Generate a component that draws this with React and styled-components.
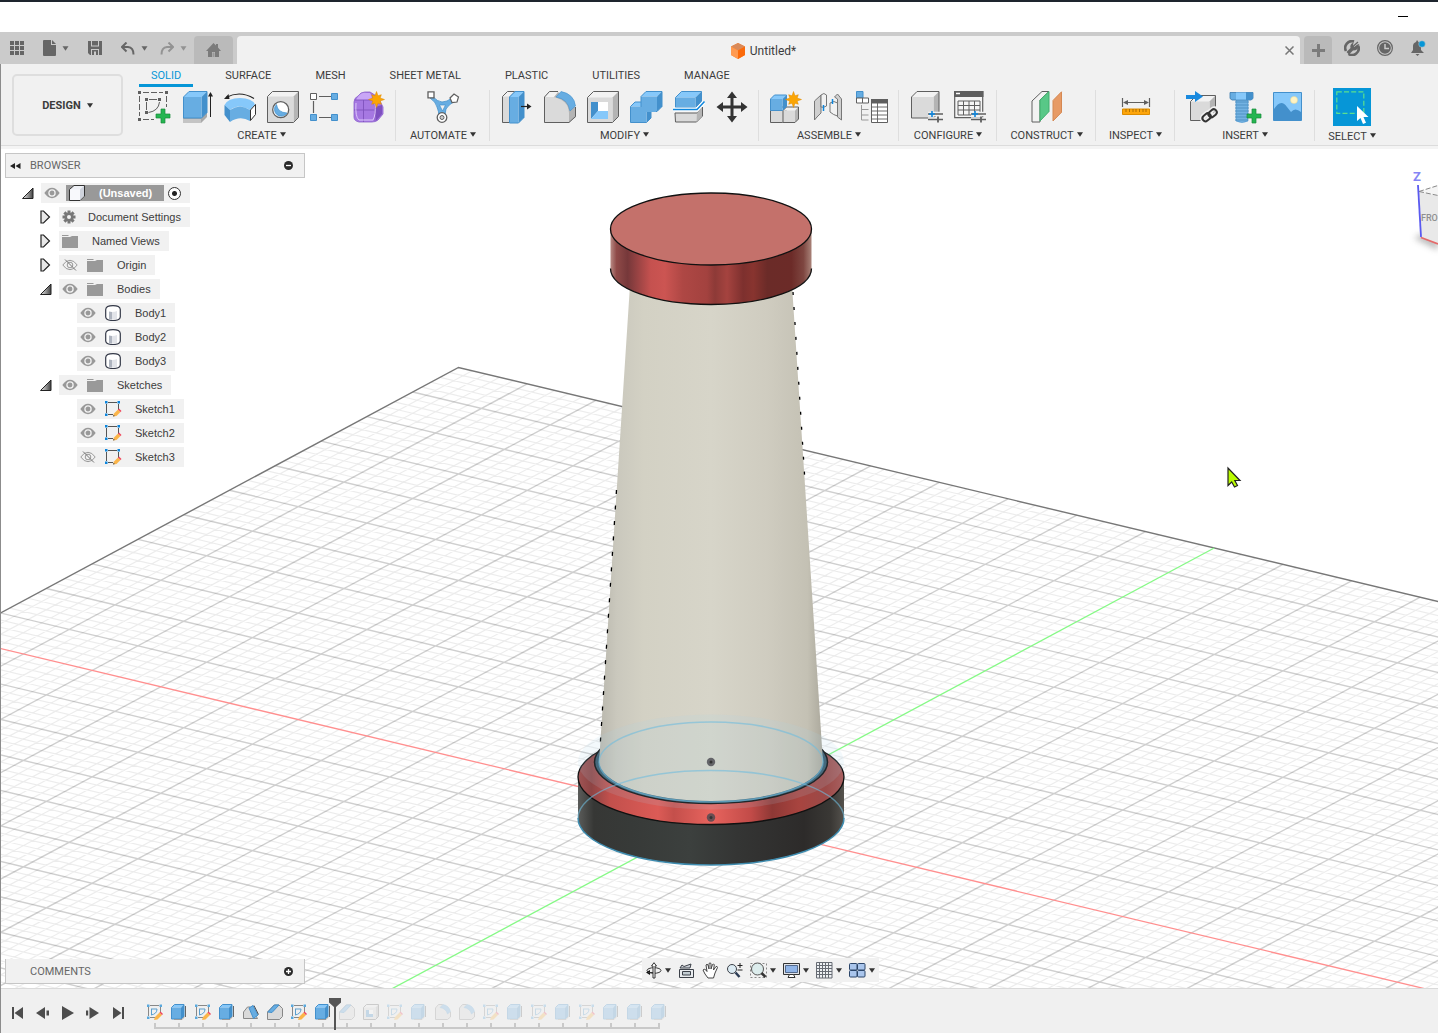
import React from "react";
import styled, { createGlobalStyle, css } from "styled-components";

const GlobalStyle = createGlobalStyle`
  * { box-sizing: border-box; }
  body {
    margin: 0;
    background: #fff;
    color: #3c3c3c;
    font-family: Roboto, "Liberation Sans", sans-serif;
    font-size: 11px;
    line-height: 13px;
  }
  button { font: inherit; color: inherit; background: none; border: 0; padding: 0; cursor: pointer; }
  ul { list-style: none; margin: 0; padding: 0; }
  svg { display: block; flex: none; }
`;

/* ---------- page frame ---------- */

const Page = styled.div`
  display: flex;
  flex-direction: column;
  min-height: 100vh;
  overflow: hidden;
`;

const TitleBar = styled.div`
  display: flex;
  justify-content: flex-end;
  height: 32px;
  padding: 0 30px;
  border-top: 2px solid #1e252e;
  background: #fff;
`;

const MinimizeButton = styled.button`
  display: flex;
  align-items: center;
  justify-content: center;
  width: 10px;
  height: 28px;
`;

const TabBar = styled.div`
  display: flex;
  height: 32px;
  padding-top: 4px;
  background: #cbcbcb;
  color: #666;
`;

const QuickTools = styled.div`
  display: flex;
  align-items: center;
  gap: 19px;
  width: 194px;
  padding: 0 7px 4px 10px;
`;

const ToolCluster = styled.div`
  display: flex;
  align-items: center;
  gap: ${(p) => p.$gap}px;
`;

const IconButton = styled.button`
  display: flex;
  align-items: center;
  justify-content: center;
  opacity: ${(p) => (p.$faded ? 0.55 : 1)};
`;

const SideTab = styled.button`
  display: flex;
  align-items: center;
  justify-content: center;
  width: ${(p) => p.$width}px;
  border-radius: 4px 4px 0 0;
  background: #bababa;
  color: #7b7b7b;
`;

const DocumentTab = styled.div`
  display: flex;
  flex: 1;
  align-items: center;
  margin: 0 4px;
  border-radius: 4px 4px 0 0;
  background: #f1f1f1;
`;

const DocumentName = styled.span`
  display: flex;
  flex: 1;
  align-items: center;
  justify-content: center;
  gap: 5px;
  padding: 2px 0 0 12px;
  color: #3c3c3c;
  font-size: 12px;
`;

const CloseButton = styled(IconButton)`
  width: 22px;
  height: 22px;
`;

const StatusIcons = styled.div`
  display: flex;
  align-items: center;
  gap: 17px;
  padding: 0 12px 4px;
`;

const Workspace = styled.main`
  display: flex;
  flex: 1;
  flex-direction: column;
  border-left: 1px solid #8c8c8c;
`;

/* ---------- ribbon ---------- */

const Ribbon = styled.header`
  display: flex;
  gap: 4px;
  height: 85px;
  padding-left: 11px;
  background: linear-gradient(#f1f1f1 81px, #dcdcdc 81px, #dcdcdc 82px, #f4f4f4 82px);
`;

const WorkspaceButton = styled.button`
  display: flex;
  align-items: center;
  justify-content: center;
  gap: 6px;
  width: 111px;
  height: 62px;
  margin-top: 10px;
  border: 2px solid #dedede;
  border-radius: 5px;
  font-weight: 700;
`;

const RibbonBody = styled.div`
  display: flex;
  flex: 1;
  flex-direction: column;
`;

const RibbonTabs = styled.nav`
  display: flex;
  gap: 20px;
  height: 24px;
  padding-left: 12px;
`;

const RibbonTab = styled.button`
  height: 23px;
  padding: 3px 12px 0;
  border-bottom: 3px solid ${(p) => (p.$active ? "#0696d7" : "transparent")};
  color: ${(p) => (p.$active ? "#0696d7" : "#3c3c3c")};
  white-space: nowrap;
`;

const GroupRow = styled.div`
  display: flex;
`;

const Group = styled.section`
  display: flex;
  flex-direction: column;
  align-items: center;
  min-width: ${(p) => p.$min || 0}px;
  height: 54px;
  padding: 0 11px;
  background: linear-gradient(#dedede, #dedede) right 2px / 1px 51px no-repeat;
  &:last-child { background: none; }
`;

const GroupIcons = styled.div`
  display: flex;
  align-items: center;
  gap: 11px;
  height: 38px;
`;

const CommandButton = styled.button`
  display: flex;
  align-items: center;
  justify-content: center;
  width: ${(p) => (p.$active ? 38 : 32)}px;
  height: ${(p) => (p.$active ? 38 : 32)}px;
  background: ${(p) => (p.$active ? "#0696d7" : "none")};
`;

const GroupLabel = styled.button`
  display: flex;
  align-items: flex-start;
  gap: 3px;
  margin-top: 4px;
  white-space: nowrap;
  svg { margin-top: 3px; }
`;

/* ---------- canvas and its overlays ---------- */

const Canvas = styled.div`
  position: relative;
  flex: 1;
  min-height: 600px;
  overflow: hidden;
  background: #fff;
`;

const SceneSvg = styled.svg`
  position: absolute;
  inset: 0;
  width: 100%;
  height: 100%;
`;

const ViewCube = styled.svg`
  position: absolute;
  top: 16px;
  right: 0;
`;

const CubeText = styled.text`
  font: ${(p) => (p.$axis ? "700 13px" : "500 9px")} Roboto, "Liberation Sans", sans-serif;
  fill: ${(p) => (p.$axis ? "#8585f5" : "#8f8f8f")};
`;

const BrowserPanel = styled.aside`
  position: absolute;
  top: 4px;
  left: 4px;
  width: 300px;
`;

const panelBar = css`
  display: flex;
  align-items: center;
  height: 25px;
  padding: 0 11px 0 4px;
  border: 1px solid #c6c6c6;
  background: #f1f1f1;
  color: #666;
`;

const PanelHeader = styled.div`${panelBar}`;

const PanelTitle = styled.span`
  flex: 1;
  margin-left: 9px;
`;

const CommentsPanel = styled.section`
  ${panelBar}
  position: absolute;
  bottom: 4px;
  left: 4px;
  width: 300px;
  padding-left: 15px;
  border-top: 0;
`;

const Tree = styled.ul`
  padding-top: 3px;
  font-family: "Liberation Sans", Arial, sans-serif;
  line-height: 12px;
`;

const TreeRow = styled.li`
  display: flex;
  align-items: center;
  gap: 8px;
  height: 24px;
  padding-left: ${(p) => 17 + p.$level * 18}px;
`;

const ArrowSlot = styled.button`
  display: flex;
  width: 11px;
  height: 14px;
  align-items: center;
`;

const NodeBox = styled.div`
  display: flex;
  align-items: center;
  gap: 9px;
  height: 20px;
  padding: 0 9px 0 3px;
  background: #f1f1f1;
`;

const NodeName = styled.span`
  display: flex;
  align-items: center;
  gap: ${(p) => (p.$tight ? 10 : 14)}px;
  white-space: nowrap;
`;

const RootName = styled(NodeName)`
  height: 16px;
  margin-left: -3px;
  padding: 0 12px 0 3px;
  background: #999;
  color: #fff;
  font-weight: 700;
`;

const ActiveRadio = styled.input`
  appearance: none;
  width: 13px;
  height: 13px;
  margin: 0 0 0 -5px;
  border: 1px solid #333;
  border-radius: 50%;
  background: radial-gradient(circle, #222 0 2px, #fff 3px);
`;

const NavBar = styled.div`
  position: absolute;
  bottom: 6px;
  left: calc(50% - 78px);
  display: flex;
  align-items: center;
  gap: 7px;
  height: 24px;
  padding: 0 4px 0 3px;
  background: #f1f1f1;
`;

/* ---------- timeline ---------- */

const TimelineBar = styled.footer`
  display: flex;
  gap: 18px;
  height: 45px;
  padding-left: 10px;
  border-top: 1px solid #dadada;
  background: #f0f0f0;
`;

const Playback = styled.div`
  display: flex;
  align-items: center;
  gap: 11px;
  height: 40px;
  margin-top: 4px;
`;

const Timeline = styled.div`
  display: flex;
  flex-direction: column;
  padding-top: 15px;
`;

const Features = styled.div`
  display: flex;
`;

const Feature = styled.div`
  position: relative;
  display: flex;
  justify-content: center;
  width: 24px;
`;

const FeatureButton = styled(IconButton)`
  opacity: ${(p) => (p.$pending ? 0.25 : 1)};
`;

const Marker = styled.svg`
  position: absolute;
  top: -6px;
  left: -6px;
`;

const Rail = styled.div`
  display: flex;
  justify-content: space-between;
  height: 6px;
  margin: 3px 11px 0;
  border-bottom: 2px solid #c9c9c9;
`;

const Tick = styled.span`
  width: 2px;
  height: 4px;
  background: #c9c9c9;
`;

/* ---------- icons ---------- */

const Caret = ({ color = "#333", w = 6 }) => (
  <svg width={w} height="5" viewBox="0 0 6 5"><path d="M0 .3h6L3 4.7z" fill={color} /></svg>
);

const B = "#67ade2";
const BL = "#86c8fa";
const BD = "#4390cc";
const G = "#dadada";
const GL = "#f2f2f2";
const GD = "#b4b4b4";
const K = "#5f5f5f";

const Star = ({ x, y, r = 8 }) => {
  const pts = [];
  for (let i = 0; i < 16; i++) {
    const a = (i * Math.PI) / 8;
    const d = i % 2 ? r * 0.5 : i % 4 ? r * 0.85 : r;
    pts.push(`${x + d * Math.sin(a)},${y - d * Math.cos(a)}`);
  }
  return <polygon points={pts.join(" ")} fill="#fba504" stroke="#e08a00" strokeWidth=".5" />;
};

const Plus = ({ x, y }) => (
  <path d={`M${x - 2} ${y - 7}h4v5h5v4h-5v5h-4v-5h-5v-4h5z`} fill="#25b551" stroke="#178a3a" strokeWidth=".7" />
);

const Sliders = ({ x, y }) => (
  <g>
    <path d={`M${x} ${y}h15M${x} ${y + 5.5}h15`} stroke="#f1f1f1" strokeWidth="4.5" />
    <path d={`M${x} ${y}h15M${x} ${y + 5.5}h15`} stroke={K} strokeWidth="1.6" />
    <path d={`M${x + 4} ${y - 3}v6M${x + 1} ${y}h6`} stroke="#0f86dd" strokeWidth="1.6" />
    <path d={`M${x + 10} ${y + 2.5}v6`} stroke={K} strokeWidth="1.8" />
  </g>
);

const Box = ({ x, y, w, h, d, f = G, t = GL, s = GD, k = K }) => (
  <g stroke={k} strokeWidth="1" strokeLinejoin="round">
    <path d={`M${x} ${y + d}h${w}l${d}-${d}h-${w}z`} fill={t} stroke="none" />
    <path d={`M${x + w} ${y + d}l${d}-${d}v${h}l-${d} ${d}z`} fill={s} stroke="none" />
    <path d={`M${x} ${y + d}h${w}v${h}h-${w}z`} fill={f} stroke="none" />
    <path d={`M${x} ${y + d}l${d}-${d}h${w}v${h}l-${d} ${d}h-${w}z`} fill="none" />
  </g>
);

const art = {
  sketch: (
    <g>
      <path d="M5 1.5h20M1.5 5v20M28.5 5v11M5 28.5h11" stroke={K} strokeDasharray="6 2" fill="none" />
      <path d="M0 0h3v3H0zM27 0h3v3h-3zM0 27h3v3H0zM7 7h3v3H7zM20 7h3v3h-3zM7 20h3v3H7z" fill={K} />
      <path d="M11 8.500h8M8.500 11v8M21.500 11q-1 9-11 10.500" stroke={K} fill="none" />
      <Plus x={25} y={25} />
    </g>
  ),
  extrude: (
    <g>
      <path d="M2 27h18l6-6v5l-6 6H2z" fill="#a9a9a9" /><path d="M2 28h18v4H2z" fill="#c4c4c4" />
      <Box x={2.500} y={0.500} w={18} h={21} d={5.500} f={B} t={BL} s={BD} k={BD} />
      <path d="M29.500 3v23" stroke="#222" /><path d="M27 5.500L29.500 1 32 5.500z" fill="#222" />
    </g>
  ),
  revolve: (
    <g>
      <path d="M.5 14Q4 7 16 7t15 6.500L26 19Q15 12 6 19z" fill={BL} />
      <path d="M.5 14L6 19v12L.5 24z" fill={BD} />
      <path d="M6 19q10-7 20 0v11q-10-6-20 1z" fill={B} />
      <path d="M26.500 19L31.500 13.500v10l-5 6z" fill="#fff" stroke="#333" />
      <path d="M2 6.500Q16-1 30 7.500" stroke="#222" fill="none" strokeWidth="1.200" /><path d="M0 8l4.500-5 1 5z" fill="#222" />
    </g>
  ),
  hole: (
    <g>
      <Box x={0.500} y={0.500} w={26} h={26} d={5} />
      <circle cx="13.700" cy="18.700" r="8" fill="#fff" stroke={K} strokeWidth="1.300" />
      <path d="M9.500 13.500q1 8 10.500 8.500a6.800 6.800 0 1 1-10.500-8.500z" fill={B} stroke={BD} strokeWidth=".7" />
    </g>
  ),
  pattern: (
    <g>
      <path d="M9 5.500h12M3.500 10v12M9 26.500h12" stroke={K} strokeWidth="1.200" />
      <path d="M.5 2.500h6v6h-6z" fill="#fff" stroke={K} />
      <path d="M21.500 2.500h6v6h-6zM21.500 23.500h6v6h-6zM.5 23.500h6v6h-6z" fill={B} stroke={BD} />
    </g>
  ),
  form: (
    <g>
      <path d="M1 11q0-4 4-6l3-3q3-1.500 9-1l8 5 5 10v7l-5 6q-2 2-6 2H6q-5-1-5-5z" fill="#a678e2" stroke="#8a60cc" strokeWidth=".8" />
      <path d="M3 9q3-6 7-7h7q3 4 1 7z" fill="#c9a6f7" /><path d="M22 16l7-2v9l-6 7z" fill="#7e50bf" />
      <path d="M1 19h21l7-4M10.500 9v22M20 9l2 8v13M2 9h19" stroke="#7f52bd" fill="none" strokeWidth=".9" />
      <path d="M3 12q-1 14 3 17h14q3-5 2-17" stroke="#dcc7fa" fill="none" />
      <Star x={23.500} y={8.500} r={8} />
    </g>
  ),
  automate: (
    <g>
      <path d="M5 5q6 6 10 6 5 0 10-4l3 3q-7 4-9 8-1 4-1 9h-6q0-7-2-11Q9 11 3 7z" fill={B} stroke={BD} strokeWidth=".8" />
      <path d="M12.500 14h6l-3 6z" fill="#f1f1f1" stroke={BD} strokeWidth=".7" />
      <path d="M1 .8h6v6H1z" fill="#fff" stroke={K} strokeWidth="1.300" />
      <path d="M27 3l4.500 3-1.500 5-5 .5-2-4.500z" fill="#fff" stroke={K} strokeWidth="1.200" />
      <circle cx="15" cy="26.500" r="4.800" fill="#fff" stroke={K} strokeWidth="1.300" /><circle cx="15" cy="26.500" r="2" fill="#ccc" stroke={K} />
    </g>
  ),
  press: (
    <g>
      <Box x={1.500} y={0.500} w={7} h={26} d={5} />
      <Box x={8.500} y={0.500} w={9} h={26} d={5.500} f={B} t={BL} s={BD} k={BD} />
      <path d="M20 15.500h7" stroke="#222" strokeWidth="1.200" /><path d="M26 12.500l4.500 3-4.500 3z" fill="#222" />
    </g>
  ),
  fillet: (
    <g>
      <path d="M.5 31.500V6L5.500.5h8L30 15l2 2v9l-7 5.500z" fill={GD} />
      <path d="M.5 31.500V6h9q15 3 15.500 16v9.500z" fill={G} />
      <path d="M.5 6L5.500.5h9L10 6z" fill={GL} />
      <path d="M12 6l5-5.500Q30 3 31.500 15L26 20Q24 8 12 6z" fill={B} stroke={BD} strokeWidth=".6" />
      <path d="M14 .5H5.500L.5 6v25.500H25l6.500-6V16" fill="none" stroke={K} />
    </g>
  ),
  shell: (
    <g>
      <Box x={0.500} y={0.500} w={25} h={25} d={6} />
      <path d="M4 11h17v17H4z" fill="#fff" /><path d="M4 11h7v9l-7 8z" fill={BD} /><path d="M11 20h10v8H4z" fill={BL} />
    </g>
  ),
  combine: (
    <g>
      <Box x={0.500} y={11} w={16} h={16} d={4.500} f={B} t={BL} s={BD} k={BD} />
      <Box x={11} y={0.500} w={16} h={15} d={5} f={B} t={BL} s={BD} k={BD} />
      <path d="M1 16h15v-1h10v6H16v10H1z" fill={B} />
    </g>
  ),
  split: (
    <g>
      <Box x={2.500} y={0.500} w={20} h={10} d={6} f={B} t={BL} s={BD} k={BD} />
      <path d="M2 22h22l5.500-6v9l-6 6H2.500z" fill={G} stroke={K} /><path d="M24 22l5-6v9l-5.500 6z" fill={GD} />
      <path d="M0 18.500h24l7-7.500" stroke="#fff" strokeWidth="4" fill="none" />
      <path d="M0 18.500h24l7.500-8" stroke="#0d86dd" strokeWidth="1.500" fill="none" />
    </g>
  ),
  move: (
    <path d="M16 .5l5 6.500h-3.500v7.500H25V11l6.500 5-6.500 5v-3.500h-7.500V25H21l-5 6.500L11 25h3.500v-7.500H7V21L.5 16 7 11v3.500h7.500V7H11z" fill="#333" />
  ),
  component: (
    <g>
      <Box x={0.500} y={16} w={12} h={12} d={3.500} /><Box x={13} y={16} w={12} h={12} d={3.500} />
      <Box x={0.500} y={4} w={12} h={11.500} d={4} f={B} t={BL} s={BD} k={BD} />
      <Star x={23.500} y={8.500} r={8} />
    </g>
  ),
  joint: (
    <g stroke="#777">
      <path d="M1.500 10L8 4v18l-4 4-2.500 3z" fill="#d0d0d0" /><path d="M8 4q3-3 5.500 0v11q-3 2-5.500 1z" fill={GL} />
      <path d="M28.500 29l-4-3V8l-3-2 3-3 4 5z" fill="#d0d0d0" /><path d="M17 12q4-3 7.500 0v13q-4-1-7.500-4z" fill={GL} />
      <path d="M10.500 14v6M19.500 8v5" stroke="#0d86dd" strokeWidth="1.500" />
    </g>
  ),
  bom: (
    <g>
      <path d="M.5.500h6.500v6.500H.5z" fill={B} stroke={BD} />
      <path d="M.5 7h6v5h-6zM6.500 7h6v5h-6z" fill="#fff" stroke={K} />
      <path d="M5.500 14v15h7M5.500 18.500h7M5.500 24h7" stroke="#999" fill="none" />
      <path d="M15.500 8.500h16v23h-16z" fill="#fff" stroke={K} /><path d="M15 8h17v4.500H15z" fill={K} />
      <path d="M16 16h15M16 20h15M16 24h15M16 28h15M21.500 12v19" stroke={K} strokeWidth=".9" />
    </g>
  ),
  configure: (<g><Box x={0.500} y={0.500} w={22} h={21} d={5.500} /><Sliders x={17} y={23} /></g>),
  configTable: (
    <g>
      <path d="M.7.700h28v26H.7z" fill="#f5f5f5" stroke={K} strokeWidth="1.200" /><path d="M0 0h29.500v6H0z" fill={K} /><path d="M2 2.500h4" stroke="#fff" strokeWidth="1.500" />
      <path d="M4 10h22v14H4zM4 14.500h22M4 19h22M9.500 10v14M15 10v14M20.500 10v14" fill="none" stroke={K} />
      <Sliders x={17} y={23} />
    </g>
  ),
  plane: (
    <g>
      <path d="M1 10L11 .5h7L9 9v22H1z" fill={GL} stroke={K} /><path d="M9 9L18 .5v20L9 30z" fill="#58c887" stroke="#3fae6d" />
      <path d="M22 9.500L30.500.8v20.500L22 30z" fill="#e79a65" stroke="#d58852" />
    </g>
  ),
  measure: (
    <g>
      <path d="M2.500 7v9M29.500 7v9M4 11.500h24" stroke={K} strokeWidth="1.200" /><path d="M3 11.500l5-2.500v5zM29 11.500l-5-2.500v5z" fill={K} />
      <path d="M2.500 18h27v5.500h-27z" fill="#fda50b" stroke="#dd8c00" /><path d="M6 18v3M9.500 18v3M13 18v3M16 18v3M19.500 18v3M23 18v3M26 18v3" stroke="#9b6300" strokeWidth=".8" />
    </g>
  ),
  derive: (
    <g>
      <Box x={4.500} y={4.500} w={19} h={19} d={6} />
      <path d="M0 4h9V0l8 5.500-8 5.500V8H0z" fill="#1a8ade" />
      <g fill="none" stroke="#f1f1f1" strokeWidth="5"><rect x="16" y="23" width="10" height="6" rx="3" transform="rotate(-40 21 26)" /><rect x="22" y="19" width="10" height="6" rx="3" transform="rotate(-40 27 22)" /></g>
      <g fill="none" stroke="#333" strokeWidth="2"><rect x="16" y="23" width="9" height="6" rx="3" transform="rotate(-40 21 26)" /><rect x="22" y="19" width="9" height="6" rx="3" transform="rotate(-40 27 22)" /></g>
    </g>
  ),
  fastener: (
    <g>
      <path d="M7 8h12v22q-6 3-12 0z" fill="#73b2e2" stroke={BD} strokeWidth=".6" />
      <path d="M6 11h14M6 14h14M6 17h14M6 20h14M6 23h14M6 26h14M6 29h13" stroke="#4d8ec2" strokeWidth=".9" />
      <path d="M1 1.500h23v6L22 9H3L1 7.500z" fill={B} stroke="#3979ad" strokeWidth=".8" /><path d="M17 1.500h7v6L22 9h-5z" fill={BD} /><path d="M7 1.500h10v7H7z" fill={BL} />
      <Plus x={25} y={25} />
    </g>
  ),
  canvas: (
    <g>
      <path d="M1.500 1.500h28v28h-28z" fill={BL} stroke={BD} />
      <path d="M2 18Q9 7 15 16l4 5q4-5 10 0v8H2z" fill={BD} /><circle cx="22" cy="9" r="3.500" fill="#fff3c4" stroke="#e9d78e" strokeWidth=".5" />
    </g>
  ),
  select: (
    <g>
      <path d="M.8.800h27v21.500h-27z" fill="none" stroke="#5be08e" strokeWidth="1.200" strokeDasharray="5 2.200" />
      <path d="M21 15v15l3.500-3 2.500 6 3-1.200-2.500-5.800h5z" fill="#fff" />
    </g>
  ),
};

const CommandArt = ({ name }) => (
  <svg width="32" height="32" viewBox="0 0 32 32" overflow="visible">{art[name]}</svg>
);

const Eye = ({ off }) => (
  <svg width="16" height="12" viewBox="0 0 16 12">
    {off ? (
      <g fill="none" stroke="#999"><path d="M.8 6Q4 1.300 8 1.300T15.200 6Q12 10.700 8 10.700T.8 6z" /><circle cx="8" cy="6" r="2.800" /><path d="M3 .5l11 11" stroke="#777" /></g>
    ) : (
      <g><path d="M.3 6Q4 .8 8 .8T15.700 6Q12 11.200 8 11.200T.3 6z" fill="#999" /><circle cx="8" cy="6" r="3.100" fill="none" stroke="#f1f1f1" strokeWidth="1.300" /></g>
    )}
  </svg>
);

const Folder = () => (
  <svg width="16" height="13" viewBox="0 0 16 13"><path d="M0 0h6l1 1H0zM0 2h8l2-1h6v12H0z" fill="#999" /></svg>
);

const Gear = () => (
  <svg width="16" height="14" viewBox="-7 -7 16 14">
    {[0, 45, 90, 135].map((a) => <path key={a} d="M-1.500-6.500h3v13h-3z" fill="#777" transform={`rotate(${a})`} />)}
    <circle r="4.600" fill="#777" /><circle r="2" fill="#f1f1f1" />
  </svg>
);

const BodyIcon = () => (
  <svg width="16" height="16" viewBox="0 0 16 16">
    <path d="M.7 4.500Q1 .7 8 .7t7.300 3.800v7.500q-.3 3.500-7.300 3.500T.7 12z" fill="#fff" stroke="#343948" strokeWidth="1.200" />
    <path d="M4 6.500l3 .5v7.500l-3-.5z" fill="#aeb4bf" /><path d="M7 7q3 0 5-1v8l-5 .5z" fill="#e2e4e9" />
  </svg>
);

const SketchIcon = () => (
  <svg width="16" height="16" viewBox="0 0 16 16" overflow="visible">
    <path d="M3 1.500h9M1.500 3v9M13.500 3v6M3 13.500h5" stroke="#555" fill="none" />
    <path d="M0 0h2.500v2.500H0zM12.500 0H15v2.500h-2.500zM0 12.500h2.500V15H0z" fill="#0d86dd" />
    <path d="M9 12.500l4-4 2.500 2.500-4 4L8 15.500z" fill="#fbb54a" /><path d="M13 8.500l1-1L16.500 10l-1 1z" fill="#f0415a" /><path d="M8 15.500l.5-1.700 1.500 1.300z" fill="#555" />
  </svg>
);

const CubeIcon = () => (
  <svg width="16" height="16" viewBox="0 0 16 16">
    <path d="M.5 4.500L5 .5h10.500V11L11 15.500H.5z" fill="#eef0f5" stroke="#333" /><path d="M11 4.500L15 1v10l-4 4z" fill="#cfd3dc" /><path d="M1 4.500h10v10.500H1z" fill="#f8f9fc" />
  </svg>
);

const Arrow = ({ open }) => (
  <svg width="12" height="14" viewBox="0 0 12 14">
    {open ? <path d="M.5 12.500h10.500V2z" fill="url(#arrowShade)" stroke="#222" /> : <path d="M1 1h2.500L9.500 7 3.500 13H1z" fill="#e8e8e8" stroke="#222" strokeWidth="1.200" />}
  </svg>
);

const Badge = ({ plus }) => (
  <svg width="9" height="9" viewBox="0 0 9 9"><circle cx="4.500" cy="4.500" r="4.500" fill="#2b2b2b" /><path d={plus ? "M2 4.500h5M4.500 2v5" : "M2 4.500h5"} stroke="#fff" strokeWidth="1.300" /></svg>
);

/* small feature icons of the timeline */
const featureArt = {
  sketch: (
    <g>
      <path d="M3 1.500h9M1.500 3v9M13.500 3v6M3 13.500h5" stroke="#888" fill="none" />
      <path d="M0 .5h2.500V3H0zM12.500.5H15V3h-2.500zM0 12.500h2.500V15H0z" fill="#5aa9de" /><path d="M4 5h6M4.500 5v6M10 5q0 5-6 6" stroke="#5a9fcf" fill="none" />
      <path d="M8 13l4.500-4.500L15 11l-4.500 4.500-3.500.5z" fill="#fbb54a" /><path d="M12.500 8.500l1-1L16 10l-1 1z" fill="#f0415a" />
    </g>
  ),
  extrude: (<g><Box x={0.500} y={0.500} w={9.500} h={11.500} d={3} f={B} t={BL} s={BD} k={BD} /><path d="M3 15.500h8l2.500-3" stroke="#999" fill="none" /><path d="M14.500 2v11" stroke="#666" /></g>),
  draft: (<g><path d="M.5 14.500V8l4-5h3l7 11.500z" fill={G} stroke="#888" /><path d="M6 4l4-2.500 5 9.500-4.500 3.500z" fill={B} stroke={BD} /><path d="M11 1.500l4.500 9" stroke="#555" /></g>),
  chamfer: (<g><path d="M.5 15.500V8L7 1h5l3.500 3.500v8l-3 3z" fill={G} stroke="#888" /><path d="M.8 8L7.500 1H12L5 8.500z" fill={B} stroke={BD} /></g>),
  shell: (<g><Box x={0.500} y={0.500} w={12} h={12} d={3} /><path d="M3 6h7v7H3z" fill="#fff" /><path d="M3 6h3v4h4v3H3z" fill={BD} /></g>),
  fillet: (<g><path d="M.5 15.500V4l3-3.500h4L15.500 8v5l-3 2.500z" fill={G} stroke="#888" /><path d="M5 3.500L8 .5q6 1 7.500 7l-3 2.500Q11 4.500 5 3.500z" fill={B} stroke={BD} strokeWidth=".5" /></g>),
};

const NavArt = {
  orbit: (<g fill="none" stroke="#333"><ellipse cx="9" cy="8.500" rx="7" ry="2.800" /><path d="M8 16V4H6.500L9 .7 11.500 4H10v12z" fill="#fff" /><path d="M1 10.500l4-2.500v5z" fill="#111" stroke="none" /><path d="M3 10.500h5" /></g>),
  look: (<g fill="none" stroke="#3b4048"><path d="M1.500 7.500h14v8h-14z" fill="#e9ecef" /><path d="M4.500 9.500h8v3.500h-8z" fill="#c2ccd2" /><path d="M2 6l2-3 2 1.500L13 2l-1 4z" fill="#cfd3da" /></g>),
  pan: (<path d="M6 16l-3-4-2-4q1-1.500 3 0l1 1.500L4 3q1-1.500 2 0l1 4V1.500q1-1.200 2 0V7l1.500-4.500q1.500-1 1.800.3L11.500 8 14 4.500q1.500-.3 1.500 1L13 11l-1.500 5z" fill="#fff" stroke="#444" />),
  zoom: (<g><circle cx="6" cy="7" r="4.500" fill="#dcebf3" stroke="#3b4048" /><path d="M9.500 10.500l4 4.500" stroke="#2c3c55" strokeWidth="2.500" /><path d="M14 1v5M11.500 3.500h5M11.500 8h5" stroke="#222" /></g>),
  fit: (<g><path d="M.5 1.500h16v14H.5z" fill="none" stroke="#888" strokeDasharray="2 2" /><circle cx="7.500" cy="7" r="6" fill="#dcecec" stroke="#555" /><path d="M11.500 11l4 4" stroke="#333" strokeWidth="2.500" /></g>),
  display: (<g stroke="#333"><path d="M.5 1.500h16v11H.5z" fill="#e0e3e8" /><path d="M2.500 3.500h12v7h-12z" fill="#8fb4e8" stroke="#52698c" /><path d="M5 15.500h7l-1.500-3h-4z" fill="#fff" /></g>),
  grid: (<g><path d="M.5.500h16v16H.5z" fill="#eef1f4" /><path d="M.5.500h15.500v15.500H.5zM3.500 0v16M6.500 0v16M9.500 0v16M12.500 0v16M0 3.500h16M0 6.500h16M0 9.500h16M0 12.500h16" stroke="#666b73" fill="none" /></g>),
  views: (<g fill="#a9c5ec" stroke="#2b4569"><rect x=".5" y="1.500" width="7.500" height="6.500" rx="1" /><rect x="8.500" y="1.500" width="7.500" height="6.500" rx="1" /><rect x=".5" y="8.500" width="7.500" height="6.500" rx="1" /><rect x="8.500" y="8.500" width="7.500" height="6.500" rx="1" /></g>),
};

/* ---------- data ---------- */

const groups = [
  { label: "CREATE", min: 269, items: ["sketch", "extrude", "revolve", "hole", "pattern", "form"] },
  { label: "AUTOMATE", min: 94, items: ["automate"] },
  { label: "MODIFY", min: 269, items: ["press", "fillet", "shell", "combine", "split", "move"] },
  { label: "ASSEMBLE", min: 140, items: ["component", "joint", "bom"] },
  { label: "CONFIGURE", min: 98, items: ["configure", "configTable"] },
  { label: "CONSTRUCT", min: 99, items: ["plane"] },
  { label: "INSPECT", min: 79, items: ["measure"] },
  { label: "INSERT", min: 140, items: ["derive", "fastener", "canvas"] },
  { label: "SELECT", min: 74, items: ["select"] },
];

const ribbonTabs = ["SOLID", "SURFACE", "MESH", "SHEET METAL", "PLASTIC", "UTILITIES", "MANAGE"];

const nodes = [
  { name: "Document Settings", level: 1, icon: <Gear />, arrow: "closed", tight: true },
  { name: "Named Views", level: 1, icon: <Folder />, arrow: "closed" },
  { name: "Origin", level: 1, icon: <Folder />, arrow: "closed", eye: "off" },
  { name: "Bodies", level: 1, icon: <Folder />, arrow: "open", eye: "on" },
  { name: "Body1", level: 2, icon: <BodyIcon />, eye: "on" },
  { name: "Body2", level: 2, icon: <BodyIcon />, eye: "on" },
  { name: "Body3", level: 2, icon: <BodyIcon />, eye: "on" },
  { name: "Sketches", level: 1, icon: <Folder />, arrow: "open", eye: "on" },
  { name: "Sketch1", level: 2, icon: <SketchIcon />, eye: "on" },
  { name: "Sketch2", level: 2, icon: <SketchIcon />, eye: "on" },
  { name: "Sketch3", level: 2, icon: <SketchIcon />, eye: "off" },
];

const features = [
  "sketch", "extrude", "sketch", "extrude", "draft", "chamfer", "sketch", "extrude",
  "chamfer", "shell", "sketch", "extrude", "fillet", "fillet", "sketch", "extrude",
  "sketch", "extrude", "sketch", "extrude", "extrude", "extrude",
];
const markerIndex = 8;

const playback = [
  ["Go to start", "M1 1h2v12H1zM12 1v12L3.500 7z"],
  ["Step back", "M9 1v12L0 7zM10.500 4.500H13v5h-2.500z"],
  ["Play", "M1 0v14l12-7z"],
  ["Step forward", "M3.500 1v12L13 7zM0 4.500h2.200v5H0z"],
  ["Go to end", "M2 1v12l8.500-6zM11 1h2v12h-2z"],
];

const navTools = [
  ["orbit", true], ["look"], ["pan"], ["zoom"], ["fit", true],
  ["display", true], ["grid", true], ["views", true],
];

/* ---------- 3D scene ---------- */

const corner = { x: 458.5, y: 367.5 };
const u = { x: -45.8, y: 24.55 };
const v = { x: 68.7, y: 16.41 };
const at = (a, b) => `${corner.x + a * u.x + b * v.x} ${corner.y + a * u.y + b * v.y}`;

function gridPath(major) {
  let d = "";
  for (let i = 1; i <= 110; i++) {
    if ((i % 5 === 0) !== major || i === 55) continue;
    const k = i / 5;
    d += `M${at(k, 0)}L${at(k, 22)}M${at(0, k)}L${at(22, k)}`;
  }
  return d;
}

const Stops = ({ list }) => list.map(([o, c]) => <stop key={o} offset={o} stopColor={c} />);

const Scene = () => (
  <SceneSvg viewBox="1 149 1437 839" preserveAspectRatio="xMidYMid slice" role="img" aria-label="Lighthouse model">
    <defs>
      <linearGradient id="arrowShade" x2="1"><Stops list={[[0, "#eee"], [1, "#444"]]} /></linearGradient>
      <linearGradient id="cap">
        <Stops list={[[0, "#b88a84"], [0.03, "#8f4a48"], [0.085, "#76383a"], [0.2, "#c5514f"], [0.27, "#cc5552"], [0.36, "#ae4744"], [0.48, "#a3423f"], [0.52, "#8d3a37"], [0.58, "#a5433f"], [0.66, "#7d302e"], [0.71, "#88342f"], [0.78, "#6b2b28"], [0.9, "#6c2b28"], [0.96, "#7e4640"], [1, "#a98379"]]} />
      </linearGradient>
      <linearGradient id="tower">
        <Stops list={[[0, "#b9b7ad"], [0.08, "#cac8bd"], [0.2, "#d3d1c4"], [0.5, "#d7d5c9"], [0.75, "#cfccc0"], [0.93, "#c4c1b4"], [1, "#aba89c"]]} />
      </linearGradient>
      <linearGradient id="base">
        <Stops list={[[0, "#5b5c5a"], [0.06, "#363735"], [0.2, "#373a38"], [0.42, "#3c403e"], [0.6, "#343534"], [0.85, "#2d2b2a"], [0.95, "#3a3835"], [1, "#55524d"]]} />
      </linearGradient>
      <linearGradient id="chamfer">
        <Stops list={[[0, "#a05555"], [0.05, "#8d4444"], [0.12, "#c2504c"], [0.3, "#dc5b56"], [0.36, "#c44f4b"], [0.5, "#e8645e"], [0.65, "#c24b48"], [0.73, "#8e3835"], [0.83, "#a8443f"], [0.93, "#9b4a48"], [1, "#a86060"]]} />
      </linearGradient>
    </defs>

    <path d={gridPath(false)} stroke="#000" strokeOpacity=".075" strokeWidth="1.200" fill="none" />
    <path d={gridPath(true)} stroke="#000" strokeOpacity=".19" strokeWidth="1.400" fill="none" />
    <path d={`M${at(22, 0)}L${at(0, 0)}L${at(0, 22)}`} stroke="#777" strokeWidth="1.400" fill="none" />
    <path d={`M${at(11, 0)}L${at(11, 22)}`} stroke="#ff8f8f" strokeWidth="1.300" />
    <path d={`M${at(0, 11)}L${at(22, 11)}`} stroke="#86f986" strokeWidth="1.300" />

    <path d="M578 777V818A133 47 0 0 0 844 818V777z" fill="url(#base)" />
    <ellipse cx="711" cy="777" rx="133" ry="47.500" fill="url(#chamfer)" stroke="#111" strokeWidth="1.300" />
    <ellipse cx="711" cy="762" rx="116.500" ry="41.500" fill="#35586b" stroke="#0b0b0b" strokeWidth="1.500" />
    <path d="M630 285L599.500 755Q599 758 599 761A112 40 0 0 0 823 761Q823 758 822.500 755L792 285z" fill="url(#tower)" />
    <path d="M793 292l12 190" stroke="#000" strokeWidth="1.300" strokeDasharray="3 12" />
    <path d="M616.500 490L600 748" stroke="#000" strokeWidth="1.300" strokeDasharray="4 11.500" />
    <ellipse cx="711" cy="762" rx="133" ry="47.500" fill="#a9d8ea" fillOpacity=".14" />
    <g fill="none" stroke="#6fbddd" strokeWidth="1.500">
      <ellipse cx="711" cy="762" rx="112" ry="40" strokeOpacity=".6" />
      <path d="M578 818A133 47.500 0 0 1 844 818" strokeOpacity=".6" />
      <path d="M578 818A133 47 0 0 0 844 818" stroke="#3f8caf" />
    </g>
    {[762, 817.5].map((y) => (
      <g key={y}><circle cx="711" cy={y} r="4.200" fill="#484850" fillOpacity=".8" /><circle cx="711" cy={y} r="1.500" fill="#333" /></g>
    ))}

    <path d="M610.500 229V268.500A100.500 36 0 0 0 811.500 268.500V229z" fill="url(#cap)" />
    <path d="M610.500 268.500A100.500 36 0 0 0 811.500 268.500" fill="none" stroke="#111" strokeWidth="1.300" />
    <ellipse cx="711" cy="229" rx="100.500" ry="36" fill="#c4716b" stroke="#111" strokeWidth="1.300" />

    <path d="M1228 468v17.500l3.700-3.500 2.800 5 3-1.500-2.700-5h5.200z" fill="#b9fb00" stroke="#222" strokeWidth="1.200" />
  </SceneSvg>
);

/* ---------- sections ---------- */

const TopBar = () => (
  <TabBar>
    <QuickTools>
      <IconButton aria-label="Data panel">
        <svg width="14" height="14" viewBox="0 0 14 14"><path d="M0 0h4v4H0zM5 0h4v4H5zM10 0h4v4h-4zM0 5h4v4H0zM5 5h4v4H5zM10 5h4v4h-4zM0 10h4v4H0zM5 10h4v4H5zM10 10h4v4h-4z" fill="#666" /></svg>
      </IconButton>
      <ToolCluster $gap={6}>
        <IconButton aria-label="File"><svg width="13" height="16" viewBox="0 0 13 16"><path d="M1 0h7v5h5v10q0 1-1 1H1q-1 0-1-1V1q0-1 1-1zM9 0l4 4H9z" fill="#666" /></svg></IconButton>
        <IconButton aria-label="File menu"><Caret color="#666" w={7} /></IconButton>
      </ToolCluster>
      <IconButton aria-label="Save">
        <svg width="14" height="14" viewBox="0 0 14 14"><path d="M0 0h14v14H2l-2-2z" fill="#666" /><path d="M3 0h1v4.500h6V0h1v5.500H3zM3 14V8h8v6h-1V9H4v5z" fill="#cbcbcb" /><path d="M6 10.500h2V14H6z" fill="#cbcbcb" /></svg>
      </IconButton>
      <ToolCluster $gap={12}>
        <ToolCluster $gap={6}>
          <IconButton aria-label="Undo"><svg width="14" height="13" viewBox="0 0 14 13"><path d="M5.500.5L1 5l4.500 4.500M1.500 5H7q5.500.5 5.500 7.500" fill="none" stroke="#666" strokeWidth="2" /></svg></IconButton>
          <IconButton aria-label="Undo history"><Caret color="#666" w={7} /></IconButton>
        </ToolCluster>
        <ToolCluster $gap={6}>
          <IconButton $faded aria-label="Redo"><svg width="14" height="13" viewBox="0 0 14 13"><path d="M8.500.5L13 5 8.500 9.500M12.500 5H7q-5.500.5-5.500 7.500" fill="none" stroke="#666" strokeWidth="2" /></svg></IconButton>
          <IconButton $faded aria-label="Redo history"><Caret color="#666" w={7} /></IconButton>
        </ToolCluster>
      </ToolCluster>
    </QuickTools>
    <SideTab $width={39} aria-label="Home">
      <svg width="15" height="14" viewBox="0 0 15 14"><path d="M7.500 0L10 2.500V1h2v3.500L15 8h-2v6H9V9H6v5H2V8H0z" fill="currentColor" /><path d="M6.500 9.500h2V14h-2z" fill="#999" /></svg>
    </SideTab>
    <DocumentTab>
      <DocumentName>
        <svg width="14" height="16" viewBox="0 0 14 16"><path d="M7 0l7 3.500v8.500L7 16 0 12V3.500z" fill="#ff8124" /><path d="M7 0l7 3.500L7 7.500 0 3.500z" fill="#d98a5a" /><path d="M0 3.500l7 4V16l-7-4z" fill="#ff9a50" /><path d="M14 3.500l-7 4V16l7-4z" fill="#fb6a0a" /></svg>
        Untitled*
      </DocumentName>
      <CloseButton aria-label="Close document"><svg width="9" height="9" viewBox="0 0 9 9"><path d="M.5.500l8 8M8.500.500l-8 8" stroke="#777" strokeWidth="1.500" /></svg></CloseButton>
    </DocumentTab>
    <SideTab $width={28} aria-label="New document"><svg width="13" height="13" viewBox="0 0 13 13"><path d="M5 0h3v5h5v3H8v5H5V8H0V5h5z" fill="currentColor" /></svg></SideTab>
    <StatusIcons>
      <IconButton aria-label="Extensions">
        <svg width="16" height="16" viewBox="0 0 16 16"><path d="M10 1.500A6.700 6.700 0 0 0 2 11M4.500 14A6.700 6.700 0 0 0 14.300 6" fill="none" stroke="#666" strokeWidth="2.600" /><path d="M2.500 12l4-4q-1-4 3-5.500l-.5 3 1.500 1.500 3-2.500 1 1q0 5-5.500 5L5 14.500z" fill="#666" /><path d="M9 6.500l5-4.500M11 7.500l4-3" stroke="#666" strokeWidth="1.300" /></svg>
      </IconButton>
      <IconButton aria-label="Job status">
        <svg width="16" height="16" viewBox="0 0 16 16"><circle cx="8" cy="8" r="7.400" fill="none" stroke="#666" strokeWidth="1.200" /><circle cx="8" cy="8" r="5.800" fill="#666" /><path d="M8 4v4.500h4" stroke="#cbcbcb" strokeWidth="1.500" fill="none" /></svg>
      </IconButton>
      <IconButton aria-label="Notifications">
        <svg width="16" height="16" viewBox="0 0 16 16"><path d="M1 13l2-3V6q0-3 3-4l1-2 1.500 2Q11 3 11 6v4l3 3zM5.500 14h4L7.500 16z" fill="#666" /><circle cx="12" cy="4" r="3.300" fill="#0696d7" stroke="#cbcbcb" strokeWidth=".5" /></svg>
      </IconButton>
    </StatusIcons>
  </TabBar>
);

const Commands = () => (
  <Ribbon>
    <WorkspaceButton>DESIGN <Caret /></WorkspaceButton>
    <RibbonBody>
      <RibbonTabs>
        {ribbonTabs.map((t, i) => <RibbonTab key={t} $active={i === 0}>{t}</RibbonTab>)}
      </RibbonTabs>
      <GroupRow>
        {groups.map((g) => (
          <Group key={g.label} $min={g.min}>
            <GroupIcons>
              {g.items.map((n) => (
                <CommandButton key={n} $active={n === "select"} aria-label={n}><CommandArt name={n} /></CommandButton>
              ))}
            </GroupIcons>
            <GroupLabel>{g.label}<Caret /></GroupLabel>
          </Group>
        ))}
      </GroupRow>
    </RibbonBody>
  </Ribbon>
);

const Browser = () => (
  <BrowserPanel>
    <PanelHeader>
      <IconButton aria-label="Collapse browser"><svg width="11" height="8" viewBox="0 0 11 8"><path d="M5 1v6L0 4zM10.500 1v6l-5-3z" fill="#222" /></svg></IconButton>
      <PanelTitle>BROWSER</PanelTitle>
      <IconButton aria-label="Minimize browser"><Badge /></IconButton>
    </PanelHeader>
    <Tree>
      <TreeRow $level={0}>
        <ArrowSlot aria-label="Collapse document"><Arrow open /></ArrowSlot>
        <NodeBox>
          <IconButton aria-label="Toggle document"><Eye /></IconButton>
          <RootName><CubeIcon />(Unsaved)</RootName>
          <ActiveRadio type="radio" name="active" defaultChecked aria-label="Activate component" />
        </NodeBox>
      </TreeRow>
      {nodes.map((n) => (
        <TreeRow key={n.name} $level={n.level}>
          {n.arrow ? <ArrowSlot aria-label={`Expand ${n.name}`}><Arrow open={n.arrow === "open"} /></ArrowSlot> : <ArrowSlot as="span" />}
          <NodeBox>
            {n.eye && <IconButton aria-label={`Toggle ${n.name}`}><Eye off={n.eye === "off"} /></IconButton>}
            <NodeName $tight={n.tight}>{n.icon}{n.name}</NodeName>
          </NodeBox>
        </TreeRow>
      ))}
    </Tree>
  </BrowserPanel>
);

const Cube = () => (
  <ViewCube width="40" height="96" viewBox="1398 165 40 96" aria-label="View cube">
    <defs><filter id="soft" x="-50%" y="-50%" width="200%" height="200%"><feGaussianBlur stdDeviation="3" /></filter></defs>
    <path d="M1414 238l24 12v-10l-16-6z" fill="#999" opacity=".7" filter="url(#soft)" />
    <path d="M1419 191.500l19-6v58l-17-6z" fill="#f5f5f5" /><path d="M1419 192l19 4v48l-17-7z" fill="#e9e9e9" />
    <path d="M1419 191.500l19-6M1419 191.500l19 4" stroke="#888" strokeDasharray="5 2" fill="none" />
    <path d="M1418 185l3 52" stroke="#5a5af0" strokeWidth="1.800" /><path d="M1421 237.500l17 6.500" stroke="#e46a6a" strokeWidth="1.800" />
    <CubeText $axis x="1413" y="181">Z</CubeText>
    <CubeText x="1421" y="221">FRO</CubeText>
  </ViewCube>
);

const Navigation = () => (
  <NavBar>
    {navTools.map(([name, menu]) => (
      <ToolCluster key={name} $gap={3}>
        <IconButton aria-label={name}><svg width="17" height="17" viewBox="0 0 17 17">{NavArt[name]}</svg></IconButton>
        {menu && <IconButton aria-label={`${name} options`}><Caret /></IconButton>}
      </ToolCluster>
    ))}
  </NavBar>
);

const History = () => (
  <TimelineBar>
    <Playback>
      {playback.map(([label, d]) => (
        <IconButton key={label} aria-label={label}><svg width="14" height="14" viewBox="0 0 14 14"><path d={d} fill="#4d4d4d" /></svg></IconButton>
      ))}
    </Playback>
    <Timeline>
      <Features>
        {features.map((f, i) => (
          <Feature key={i}>
            <FeatureButton $pending={i >= markerIndex} aria-label={`${f} ${i + 1}`}>
              <svg width="16" height="16" viewBox="0 0 16 16" overflow="visible">{featureArt[f]}</svg>
            </FeatureButton>
            {i === markerIndex && (
              <Marker width="12" height="32" viewBox="0 0 12 32"><path d="M0 0h12v4.500L7 9v23H5V9L0 4.500z" fill="#555" /></Marker>
            )}
          </Feature>
        ))}
      </Features>
      <Rail>{features.map((_, i) => <Tick key={i} />)}</Rail>
    </Timeline>
  </TimelineBar>
);

export default function App() {
  return (
    <Page>
      <GlobalStyle />
      <TitleBar>
        <MinimizeButton aria-label="Minimize window"><svg width="10" height="1" viewBox="0 0 10 1"><path d="M0 0h10v1H0z" /></svg></MinimizeButton>
      </TitleBar>
      <TopBar />
      <Workspace>
        <Commands />
        <Canvas>
          <Scene />
          <Browser />
          <Cube />
          <CommentsPanel>
            <PanelTitle>COMMENTS</PanelTitle>
            <IconButton aria-label="Show comments"><Badge plus /></IconButton>
          </CommentsPanel>
          <Navigation />
        </Canvas>
        <History />
      </Workspace>
    </Page>
  );
}
